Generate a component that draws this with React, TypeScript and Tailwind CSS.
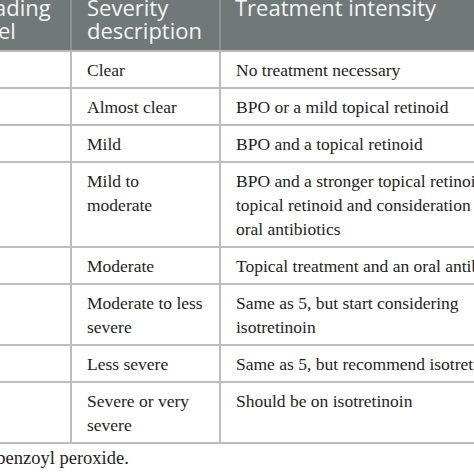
import React from "react";

const rows: { sev: string[]; tx: string[] }[] = [
  { sev: ["Clear"], tx: ["No treatment necessary"] },
  { sev: ["Almost clear"], tx: ["BPO or a mild topical retinoid"] },
  { sev: ["Mild"], tx: ["BPO and a topical retinoid"] },
  {
    sev: ["Mild to", "moderate"],
    tx: [
      "BPO and a stronger topical retinoid or a",
      "topical retinoid and consideration of",
      "oral antibiotics",
    ],
  },
  { sev: ["Moderate"], tx: ["Topical treatment and an oral antibiotic"] },
  {
    sev: ["Moderate to less", "severe"],
    tx: ["Same as 5, but start considering", "isotretinoin"],
  },
  { sev: ["Less severe"], tx: ["Same as 5, but recommend isotretinoin"] },
  { sev: ["Severe or very", "severe"], tx: ["Should be on isotretinoin"] },
];

export default function App() {
  return (
    <div className="w-[474px] h-[474px] overflow-hidden bg-white">
      <div className="ml-[-43px] w-[620px]">
        {/* header */}
        <div
          className="flex mt-[-14px] bg-[#717878] border-b-2 border-[#b9bcbc] text-[#f4f5f5] text-[22px] leading-[23px]"
          style={{ fontFamily: '"Open Sans", sans-serif' }}
        >
          <div className="w-[115px] shrink-0 pl-[12px] pt-[10px] pb-[8px] border-r-2 border-[#8c9292] whitespace-nowrap">
            Grading
            <br />
            level
          </div>
          <div className="w-[149px] shrink-0 pl-[15px] pt-[10px] pb-[8px] border-r-2 border-[#8c9292] whitespace-nowrap">
            Severity
            <br />
            description
          </div>
          <div className="flex-1 pl-[14px] pt-[10px] pb-[8px] whitespace-nowrap">
            Treatment intensity
          </div>
        </div>
        {/* body */}
        <div
          className="text-[17.5px] leading-[24px] text-[#1e1e1e]"
          style={{ fontFamily: '"Liberation Serif", serif' }}
        >
          {rows.map((r, i) => (
            <div key={i} className="flex border-b-2 border-[#bdbdbd]">
              <div className="w-[115px] shrink-0 border-r-2 border-[#bdbdbd]" />
              <div className="w-[149px] shrink-0 pl-[15px] pt-[6px] pb-[5px] border-r-2 border-[#bdbdbd]">
                {r.sev.map((s, j) => (
                  <div key={j} className="whitespace-nowrap">
                    {s}
                  </div>
                ))}
              </div>
              <div className="flex-1 pl-[15px] pt-[6px] pb-[5px]">
                {r.tx.map((s, j) => (
                  <div key={j} className="whitespace-nowrap">
                    {s}
                  </div>
                ))}
              </div>
            </div>
          ))}
          <div className="pt-[2px] ml-[-6px] text-[18.5px] whitespace-nowrap">
            BPO, benzoyl peroxide.
          </div>
        </div>
      </div>
    </div>
  );
}
